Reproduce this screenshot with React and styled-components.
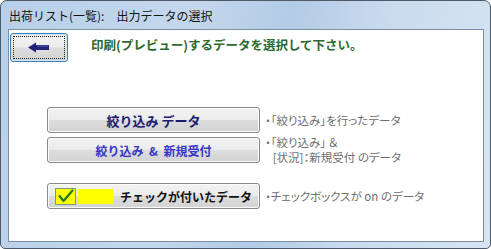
import styled, { createGlobalStyle } from "styled-components";

const GlobalStyle = createGlobalStyle`
  body {
    margin: 0;
    background: #ffffff;
    font-family: "Noto Sans CJK JP", "Noto Sans", sans-serif;
  }
`;

const Window = styled.div`
  width: 491px;
  height: 249px;
  box-sizing: border-box;
  border: 1px solid #4c5a69;
  border-radius: 7px 7px 5px 5px;
  background: linear-gradient(
    100deg,
    #b7cfe8 0%,
    #c4d8ed 35%,
    #b3cbe5 55%,
    #cbdcef 75%,
    #d6e4f3 100%
  );
  display: flex;
  flex-direction: column;
  padding: 0 6px 6px 7px;
  overflow: hidden;
`;

const TitleBar = styled.div`
  height: 28px;
  display: flex;
  align-items: center;
  padding-left: 1px;
  font-size: 12px;
  color: #141414;
  white-space: pre;
`;

const Client = styled.div`
  flex: 1;
  background: #ffffff;
  border: 1px solid #7b8da2;
  display: flex;
  flex-direction: column;
`;

const TopRow = styled.div`
  display: flex;
  align-items: center;
  gap: 23px;
  padding: 3px 0 0 1px;
`;

const BackButton = styled.button`
  width: 58px;
  height: 29px;
  box-sizing: border-box;
  border: 1px solid #3c7fb1;
  border-radius: 3px;
  background: linear-gradient(#f4f4f4 0%, #ececec 48%, #dddddd 52%, #d2d2d2 100%);
  box-shadow: inset 0 0 0 1px #cde6f7;
  padding: 0;
  display: flex;
  align-items: center;
  justify-content: center;
  position: relative;

  &::after {
    content: "";
    position: absolute;
    inset: 2px;
    border: 1px dotted #202020;
  }
`;

const Prompt = styled.div`
  font-size: 12.5px;
  font-weight: 700;
  color: #2a6a30;
  margin-top: -6px;
`;

const Options = styled.div`
  display: flex;
  flex-direction: column;
  gap: 4px;
  padding-left: 38px;
  margin-top: 45px;
`;

const OptionRow = styled.div`
  height: 26px;
  display: flex;
  align-items: center;
  gap: 5px;
  margin-top: ${(p) => p.$gapTop || 0}px;
`;

const OptionButton = styled.button`
  width: 213px;
  height: 26px;
  flex-shrink: 0;
  box-sizing: border-box;
  border: 1px solid #8a8a8a;
  border-radius: 3px;
  background: linear-gradient(#f3f3f3 0%, #ebebeb 48%, #dcdcdc 52%, #d3d3d3 100%);
  box-shadow: inset 0 0 0 1px #fbfbfb;
  display: flex;
  align-items: center;
  justify-content: ${(p) => (p.$left ? "flex-start" : "center")};
  padding: ${(p) => (p.$left ? "0 0 0 7px" : "0")};
  font-family: "Noto Sans CJK JP", "Noto Sans", sans-serif;
  font-size: ${(p) => p.$size || 13}px;
  font-weight: 700;
  color: ${(p) => p.$color || "#1b1b70"};
  white-space: pre;
`;

const Note = styled.div`
  font-size: 11.5px;
  line-height: 15px;
  color: #6e6e6e;
  white-space: pre;
  font-feature-settings: "palt";
`;

const CheckBox = styled.span`
  width: 19px;
  height: 15px;
  border: 1px solid #7f977f;
  background: #ffff00;
  display: flex;
  align-items: center;
  justify-content: center;
`;

const YellowBar = styled.span`
  width: 35px;
  height: 15px;
  background: #ffff00;
  margin-left: 2px;
  margin-right: 7px;
`;

function BackArrow() {
  return (
    <svg width="22" height="11" viewBox="0 0 22 11">
      <path d="M0 5.5 L8 0.5 L8 3 L21 3 L21 8 L8 8 L8 10.5 Z" fill="#22227c" />
      <path d="M9 4 L20 4" stroke="#5a5ab0" strokeWidth="1" />
    </svg>
  );
}

function CheckMark() {
  return (
    <svg width="16" height="14" viewBox="0 0 16 14">
      <path
        d="M1.5 7 L5.5 12 L14.5 1.5"
        fill="none"
        stroke="#1d7a1d"
        strokeWidth="2.2"
        strokeLinecap="round"
        strokeLinejoin="round"
      />
    </svg>
  );
}

export default function App() {
  return (
    <>
      <GlobalStyle />
      <Window>
        <TitleBar>出荷リスト(一覧):　出力データの選択</TitleBar>
        <Client>
          <TopRow>
            <BackButton>
              <BackArrow />
            </BackButton>
            <Prompt>印刷(プレビュー)するデータを選択して下さい。</Prompt>
          </TopRow>
          <Options>
            <OptionRow>
              <OptionButton>絞り込み データ</OptionButton>
              <Note>・「絞り込み」を行ったデータ</Note>
            </OptionRow>
            <OptionRow>
              <OptionButton $size={12} $color="#3535c8">
                絞り込み  &  新規受付
              </OptionButton>
              <Note>{"・「絞り込み」 ＆\n   [状況]：新規受付 のデータ"}</Note>
            </OptionRow>
            <OptionRow $gapTop={16}>
              <OptionButton $left $size={12} $color="#111111">
                <CheckBox>
                  <CheckMark />
                </CheckBox>
                <YellowBar />
                チェックが付いたデータ
              </OptionButton>
              <Note>・チェックボックスが on のデータ</Note>
            </OptionRow>
          </Options>
        </Client>
      </Window>
    </>
  );
}
